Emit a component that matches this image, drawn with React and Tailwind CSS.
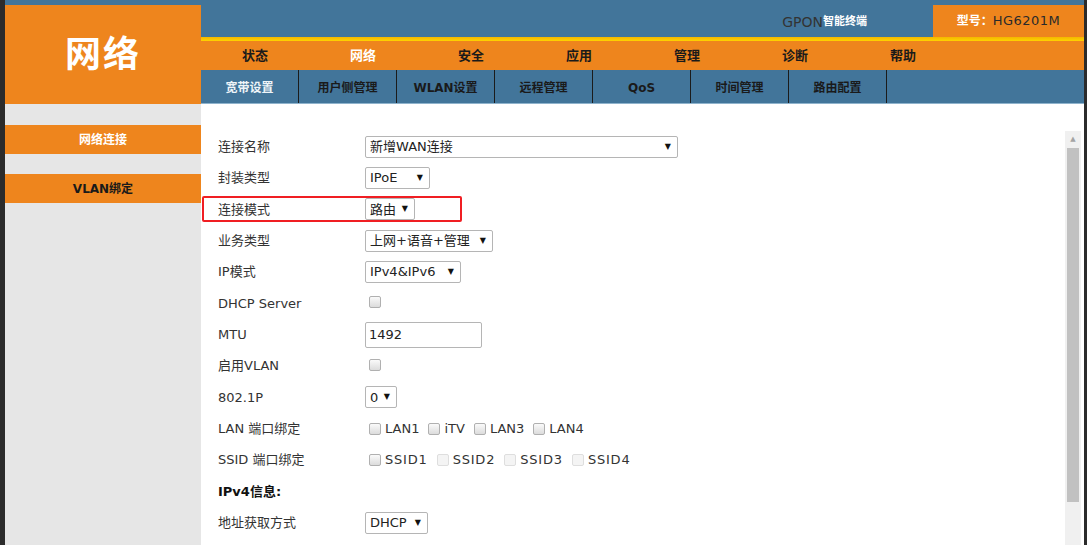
import React from 'react';

const font = { fontFamily: '"DejaVu Sans", "Noto Sans CJK SC", sans-serif' };

const mainNav = ['状态', '网络', '安全', '应用', '管理', '诊断', '帮助'];
const subNav = ['宽带设置', '用户侧管理', 'WLAN设置', '远程管理', 'QoS', '时间管理', '路由配置'];

const Select = ({ value, width }) => (
  <div
    className="h-[22px] border border-[#b5b5b5] rounded-[2px] bg-white flex items-center justify-between pl-[4px] pr-[6px] text-[13px] text-[#222]"
    style={{ width }}
  >
    <span>{value}</span>
    <span className="text-[8px] text-[#111]">▼</span>
  </div>
);

const Checkbox = ({ disabled }) => (
  <span
    className={`inline-block w-[12px] h-[12px] rounded-[2px] border ${
      disabled ? 'border-[#dedede] bg-[#f4f4f4]' : 'border-[#b0b0b0] bg-gradient-to-b from-[#fafafa] to-[#dcdcdc]'
    }`}
  ></span>
);

const Row = ({ label, bold, children }) => (
  <div className="h-[31.33px] flex items-center">
    <div className={`w-[147px] text-[13px] ${bold ? 'font-bold text-[#111]' : 'text-[#333]'}`}>{label}</div>
    <div className="flex items-center">{children}</div>
  </div>
);

const App = () => {
  return (
    <div className="w-[1087px] h-[545px] overflow-hidden flex bg-[#2b2b2b]" style={font}>
      {/* left dark edge */}
      <div className="w-[5px] shrink-0"></div>

      <div className="w-[1079px] flex flex-col">
        {/* Header */}
        <div className="flex h-[104px] shrink-0">
          <div className="w-[196px] flex flex-col">
            <div className="h-[5px] bg-[#42759a]"></div>
            <div className="flex-1 bg-[#ee851d] flex items-center justify-center text-white text-[36px] font-bold tracking-[2px]">
              网络
            </div>
          </div>
          <div className="flex-1 flex flex-col">
            <div className="h-[37px] bg-[#42759a] flex">
              <div className="flex-1 flex items-center justify-end pr-[66px] pt-[8px] text-[13px]">
                <span className="text-[#333] text-[14px]">GPON</span>
                <span className="text-white font-bold text-[11px]">智能终端</span>
              </div>
              <div className="w-[151px] mt-[5px] bg-[#ee851d] flex items-center justify-center text-[13px]">
                <span className="text-white font-bold text-[12px]">型号：</span>
                <span className="text-[#2a2a2a] tracking-[0.5px]">HG6201M</span>
              </div>
            </div>
            <div className="h-[4px] bg-gradient-to-b from-[#f3b700] to-[#ffd200]"></div>
            <div className="h-[29px] bg-[#ee851d] flex items-center">
              {mainNav.map((item) => (
                <div
                  key={item}
                  className={`w-[108px] text-center text-[13px] font-bold ${item === '网络' ? 'text-white' : 'text-[#1a1a1a]'}`}
                >
                  {item}
                </div>
              ))}
            </div>
            <div className="h-[34px] bg-[#42759a] flex border-b border-[#8fb3cc]">
              {subNav.map((item, i) => (
                <div
                  key={item}
                  className={`w-[98px] flex items-center justify-center pt-[3px] border-r border-[#1b1b1b] text-[12px] font-bold ${
                    i === 0 ? 'text-[#eef4f8]' : 'text-[#1a1a1a]'
                  }`}
                >
                  {item}
                </div>
              ))}
            </div>
          </div>
        </div>

        {/* Body */}
        <div className="flex flex-1 min-h-0">
          {/* Sidebar */}
          <div className="w-[196px] bg-[#e6e6e6] pt-[21px] flex flex-col gap-[20px]">
            <div className="h-[29px] bg-[#ee851d] flex items-center justify-center text-[12px] font-bold text-white">
              网络连接
            </div>
            <div className="h-[29px] bg-[#ee851d] flex items-center justify-center text-[12px] font-bold text-[#1a1a1a]">
              VLAN绑定
            </div>
          </div>

          {/* Content */}
          <div className="flex-1 bg-white flex">
            <div className="flex-1 pl-[17px] pt-[27px]">
              <Row label="连接名称">
                <Select value="新增WAN连接" width={313} />
              </Row>
              <Row label="封装类型">
                <Select value="IPoE" width={65} />
              </Row>
              <div className="relative">
                <div className="absolute left-[-16px] top-[2px] w-[260px] h-[26px] border-2 border-[#f01e23] rounded-[2px]"></div>
                <Row label="连接模式">
                  <Select value="路由" width={50} />
                </Row>
              </div>
              <Row label="业务类型">
                <Select value="上网+语音+管理" width={128} />
              </Row>
              <Row label="IP模式">
                <Select value="IPv4&IPv6" width={96} />
              </Row>
              <Row label="DHCP Server">
                <span className="ml-[4px]"><Checkbox /></span>
              </Row>
              <Row label="MTU">
                <div className="w-[117px] h-[26px] border border-[#b5b5b5] rounded-[2px] flex items-center pl-[3px] text-[13px] text-[#222]">
                  1492
                </div>
              </Row>
              <Row label="启用VLAN">
                <span className="ml-[4px]"><Checkbox /></span>
              </Row>
              <Row label="802.1P">
                <Select value="0" width={32} />
              </Row>
              <Row label="LAN 端口绑定">
                <div className="flex items-center gap-[9px] ml-[4px] text-[13px] text-[#333]">
                  {['LAN1', 'iTV', 'LAN3', 'LAN4'].map((p) => (
                    <span key={p} className="flex items-center gap-[4px]">
                      <Checkbox />
                      {p}
                    </span>
                  ))}
                </div>
              </Row>
              <Row label="SSID 端口绑定">
                <div className="flex items-center gap-[9px] ml-[4px] text-[13px] text-[#333] tracking-[0.8px]">
                  {['SSID1', 'SSID2', 'SSID3', 'SSID4'].map((p, i) => (
                    <span key={p} className="flex items-center gap-[4px]">
                      <Checkbox disabled={i > 0} />
                      {p}
                    </span>
                  ))}
                </div>
              </Row>
              <Row label="IPv4信息:" bold />
              <Row label="地址获取方式">
                <Select value="DHCP" width={63} />
              </Row>
            </div>

            {/* Scrollbar */}
            <div className="w-[16px] mt-[27px] mr-[3px] bg-[#f0f0f0] flex flex-col items-center">
              <div className="h-[17px] flex items-center justify-center text-[7px] text-[#a3a3a3]">▲</div>
              <div className="w-[12px] h-[354px] bg-[#c1c1c1]"></div>
            </div>
          </div>
        </div>
      </div>

      {/* right dark edge */}
      <div className="flex-1"></div>
    </div>
  );
};

export default App;
